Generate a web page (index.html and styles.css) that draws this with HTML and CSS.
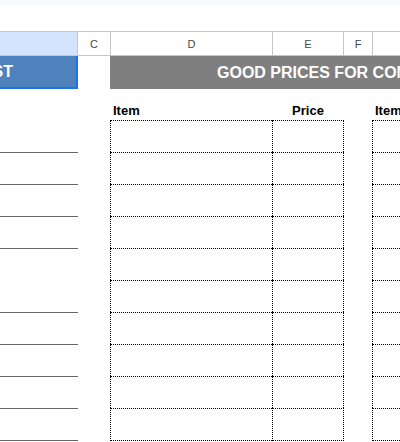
FILE: index.html
```html
<!DOCTYPE html>
<html>
<head>
<meta charset="utf-8">
<link rel="stylesheet" href="styles.css">
</head>
<body>
<div class="topbar"></div>
<div class="gap"></div>
<div class="colhead">
  <div class="hc sel"></div>
  <div class="hc">C</div>
  <div class="hc">D</div>
  <div class="hc">E</div>
  <div class="hc">F</div>
  <div class="hc"></div>
</div>
<div class="sheet">
  <div class="title-a"><span>SHOPPING LIST</span></div>
  <div class="c"></div>
  <div class="banner">GOOD PRICES FOR COMPARISON</div>

  <div class="b"></div><div class="c"></div><div class="lbl">Item</div><div class="lbl center">Price</div><div class="c"></div><div class="lbl">Item</div>

  <div class="b"></div><div class="c"></div><div class="d"></div><div class="e"></div><div class="c"></div><div class="g"></div>
  <div class="b ul"></div><div class="c"></div><div class="d"></div><div class="e"></div><div class="c"></div><div class="g"></div>
  <div class="b ul"></div><div class="c"></div><div class="d"></div><div class="e"></div><div class="c"></div><div class="g"></div>
  <div class="b ul"></div><div class="c"></div><div class="d"></div><div class="e"></div><div class="c"></div><div class="g"></div>
  <div class="b ul"></div><div class="c"></div><div class="d"></div><div class="e"></div><div class="c"></div><div class="g"></div>
  <div class="b"></div><div class="c"></div><div class="d"></div><div class="e"></div><div class="c"></div><div class="g"></div>
  <div class="b ul"></div><div class="c"></div><div class="d"></div><div class="e"></div><div class="c"></div><div class="g"></div>
  <div class="b ul"></div><div class="c"></div><div class="d"></div><div class="e"></div><div class="c"></div><div class="g"></div>
  <div class="b ul"></div><div class="c"></div><div class="d"></div><div class="e"></div><div class="c"></div><div class="g"></div>
  <div class="b ul last"></div><div class="c"></div><div class="d last"></div><div class="e last"></div><div class="c"></div><div class="g last"></div>
</div>
</body>
</html>
```
FILE: styles.css
```css
html, body {
  margin: 0;
  padding: 0;
  background: #ffffff;
  overflow: hidden;
  font-family: "Liberation Sans", Arial, sans-serif;
}
body {
  width: 400px;
  height: 442px;
}
.topbar {
  height: 5px;
  background: #f8f9fa;
}
.gap {
  height: 26px;
}
.colhead {
  display: grid;
  grid-template-columns: 78px 33px 162px 71px 29px 200px;
  width: 600px;
  height: 25px;
  box-sizing: border-box;
  border-top: 1px solid #c4c7c5;
  border-bottom: 1px solid #c4c7c5;
}
.hc {
  border-right: 1px solid #c4c7c5;
  display: flex;
  align-items: center;
  justify-content: center;
  font-size: 11px;
  color: #444746;
}
.hc.sel {
  background: #d3e3fd;
}
.sheet {
  display: grid;
  grid-template-columns: 77px 33px 162px 72px 28px 228px;
  grid-template-rows: 33px 31px repeat(9, 32px) 33px;
  width: 600px;
}
.title-a {
  margin-right: -1px;
  background: #4f81bd;
  border-right: 2px solid #1a73e8;
  border-bottom: 2px solid #1a73e8;
  display: flex;
  align-items: center;
  justify-content: flex-end;
  overflow: hidden;
  padding-right: 63px;
  white-space: nowrap;
  color: #ffffff;
  font-weight: bold;
  font-size: 16px;
}
.banner {
  grid-column: 3 / -1;
  background: #7f7f7f;
  color: #ffffff;
  font-weight: bold;
  font-size: 16px;
  white-space: nowrap;
  display: flex;
  align-items: center;
  padding-left: 107px;
}
.lbl {
  display: flex;
  align-items: flex-end;
  padding: 0 0 2px 3px;
  font-size: 13px;
  font-weight: bold;
  color: #000000;
}
.lbl.center {
  justify-content: center;
  padding-left: 0;
}
.b.ul {
  margin-right: -1px;
  border-top: 1px solid #666666;
}
.b.last {
  border-bottom: 1px solid #666666;
}
.d, .e, .g {
  border-top: 1px dotted #000000;
  border-left: 1px dotted #000000;
}
.e {
  border-right: 1px dotted #000000;
}
.last.d, .last.e, .last.g {
  border-bottom: 1px dotted #000000;
}
.d, .e, .g, .b {
  box-sizing: border-box;
}
```
